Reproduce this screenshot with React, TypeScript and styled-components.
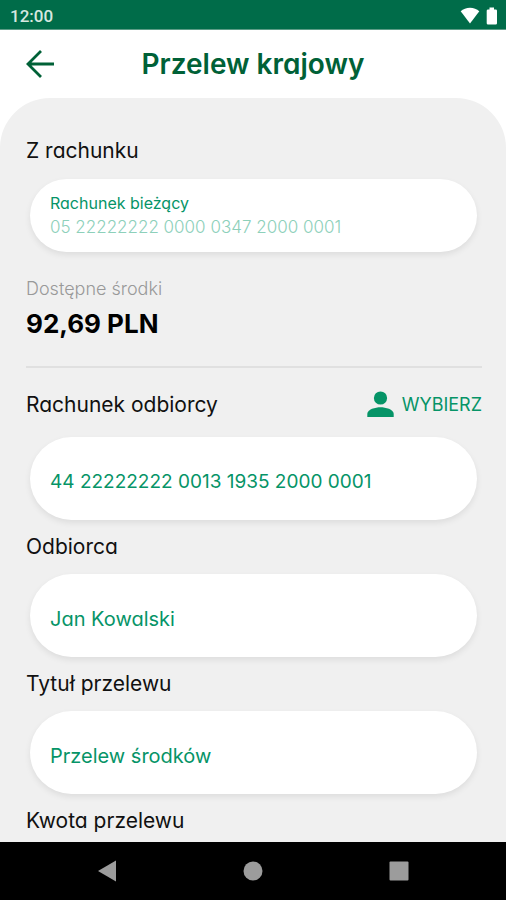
import React from "react";
import styled, { createGlobalStyle } from "styled-components";

const GlobalStyle = createGlobalStyle`
  *, *::before, *::after { box-sizing: border-box; }
  body {
    margin: 0;
    background: #fff;
    color: #111;
    font-family: "Inter", "Liberation Sans", sans-serif;
    font-feature-settings: "cv11";
  }
  button, input { font: inherit; font-feature-settings: inherit; }
`;

const Screen = styled.div`
  display: flex;
  flex-direction: column;
  height: 100vh;
  min-width: 0;
`;

const StatusBar = styled.div`
  flex: none;
  display: flex;
  align-items: center;
  justify-content: space-between;
  height: 30px;
  padding: 2px 8px 0 10px;
  background: #006c49;
  border-bottom: 1px solid #5c9c86;
`;

const Clock = styled.time`
  font-family: Roboto, sans-serif;
  font-size: 17px;
  font-weight: 500;
  line-height: 20px;
  color: #d6e8e0;
`;

const StatusIcons = styled.div`
  display: flex;
  align-items: center;
  gap: 6px;
`;

const Header = styled.header`
  flex: none;
  display: grid;
  grid-template-columns: 32px 1fr 32px;
  align-items: center;
  height: 68px;
  padding: 0 24px;
`;

const BackButton = styled.button`
  display: flex;
  padding: 0;
  border: 0;
  background: none;
  color: #006137;
`;

const Title = styled.h1`
  margin: 0;
  font-size: 28px;
  font-weight: 600;
  line-height: 36px;
  text-align: center;
  color: #006137;
`;

const Panel = styled.main`
  flex: 1;
  min-height: 0;
  overflow-y: auto;
  padding: 39px 24px 0 26px;
  border-radius: 50px 50px 0 0;
  background: #f0f0f0;
`;

const labelText = `
  font-size: 21px;
  font-weight: 400;
  line-height: 27px;
  color: #111;
`;

const SectionTitle = styled.h2`
  margin: 0;
  ${labelText}
`;

const FieldLabel = styled.label`
  display: block;
  ${labelText}
`;

const surface = `
  display: block;
  border: 0;
  background: #fff;
  box-shadow: 0 3px 6px rgba(0, 0, 0, 0.08);
  color: #069467;
  text-align: left;
`;

const AccountCard = styled.button`
  ${surface}
  width: calc(100% - 9px);
  margin: 15px 5px 0 4px;
  padding: 12px 20px 13px;
  border-radius: 37px;
`;

const AccountName = styled.span`
  display: block;
  font-size: 16px;
  line-height: 24px;
`;

const AccountNumber = styled.span`
  display: block;
  font-size: 17px;
  font-weight: 300;
  line-height: 24px;
  color: #8dd0ba;
`;

const Balance = styled.section`
  margin-top: 25px;
  padding-bottom: 24px;
  border-bottom: 2px solid #e0e0e0;
`;

const BalanceLabel = styled.p`
  margin: 0;
  font-size: 18px;
  font-weight: 300;
  line-height: 24px;
  color: #999;
`;

const Amount = styled.p`
  margin: 5px 0 0;
  font-size: 26px;
  font-weight: 700;
  line-height: 36px;
  color: #000;
`;

const LabelRow = styled.div`
  display: flex;
  align-items: center;
  justify-content: space-between;
  padding-bottom: 5px;
`;

const PickButton = styled.button`
  display: flex;
  align-items: center;
  gap: 8px;
  padding: 0;
  border: 0;
  background: none;
  font-size: 18px;
  line-height: 27px;
  color: #069467;
`;

const Form = styled.form`
  display: grid;
  gap: 13px;
  margin-top: 22px;
`;

const Field = styled.div`
  display: grid;
  gap: 14px;
  min-width: 0;
`;

const TextInput = styled.input<{ $numeric?: boolean }>`
  ${surface}
  width: calc(100% - 9px);
  height: 83px;
  margin: 0 5px 0 4px;
  padding: 6px 20px 0;
  border-radius: 42px;
  font-size: ${(p) => (p.$numeric ? "19px" : "20px")};
  line-height: 27px;
`;

const NavBar = styled.nav`
  flex: none;
  display: grid;
  grid-template-columns: repeat(3, 1fr);
  height: 58px;
  padding: 0 34px;
  background: #000;
`;

const NavButton = styled.button`
  display: flex;
  align-items: center;
  justify-content: center;
  padding: 0;
  border: 0;
  background: none;
  color: #9c9c9c;
`;

export default function App() {
  return (
    <>
      <GlobalStyle />
      <Screen>
        <StatusBar>
          <Clock>12:00</Clock>
          <StatusIcons>
            <svg width="20" height="17" viewBox="0 0 20 17" fill="#fff" aria-hidden="true">
              <path d="M10 .8C6.400 .8 3.200 2.200 .7 4.300L10 16.500 19.300 4.300C16.800 2.200 13.600 .8 10 .8Z" />
            </svg>
            <svg width="12" height="18" viewBox="0 0 12 18" fill="#fff" aria-hidden="true">
              <path d="M3.500 .5h4.500v2h1.700q1.300 0 1.300 1.300v12.400q0 1.300-1.300 1.300H2q-1.300 0-1.300-1.300V3.800Q.7 2.500 2 2.500h1.500z" />
            </svg>
          </StatusIcons>
        </StatusBar>

        <Header>
          <BackButton type="button" aria-label="Wstecz">
            <svg width="32" height="32" viewBox="0 0 32 32" fill="none" stroke="currentColor" strokeWidth="2.800" aria-hidden="true">
              <path d="M30 16H4M17 3L4 16l13 13" />
            </svg>
          </BackButton>
          <Title>Przelew krajowy</Title>
        </Header>

        <Panel>
          <SectionTitle>Z rachunku</SectionTitle>
          <AccountCard type="button">
            <AccountName>Rachunek bieżący</AccountName>
            <AccountNumber>05 22222222 0000 0347 2000 0001</AccountNumber>
          </AccountCard>

          <Balance>
            <BalanceLabel>Dostępne środki</BalanceLabel>
            <Amount>92,69 PLN</Amount>
          </Balance>

          <Form>
            <Field>
              <LabelRow>
                <FieldLabel htmlFor="account">Rachunek odbiorcy</FieldLabel>
                <PickButton type="button">
                  <svg width="27" height="28" viewBox="0 0 27 28" fill="currentColor" aria-hidden="true">
                    <circle cx="13.500" cy="8" r="6.600" />
                    <path d="M.3 27v-3.200C.3 19.400 8.500 17.300 13.500 17.300s13.200 2.100 13.200 6.500V27z" />
                  </svg>
                  WYBIERZ
                </PickButton>
              </LabelRow>
              <TextInput id="account" $numeric defaultValue="44 22222222 0013 1935 2000 0001" />
            </Field>
            <Field>
              <FieldLabel htmlFor="recipient">Odbiorca</FieldLabel>
              <TextInput id="recipient" defaultValue="Jan Kowalski" />
            </Field>
            <Field>
              <FieldLabel htmlFor="subject">Tytuł przelewu</FieldLabel>
              <TextInput id="subject" defaultValue="Przelew środków" />
            </Field>
            <SectionTitle>Kwota przelewu</SectionTitle>
          </Form>
        </Panel>

        <NavBar>
          <NavButton type="button" aria-label="Wstecz">
            <svg width="20" height="22" viewBox="0 0 20 22" fill="currentColor" aria-hidden="true">
              <path d="M1 11L19 .5v21z" />
            </svg>
          </NavButton>
          <NavButton type="button" aria-label="Ekran główny">
            <svg width="20" height="20" viewBox="0 0 20 20" fill="currentColor" aria-hidden="true">
              <circle cx="10" cy="10" r="9.500" />
            </svg>
          </NavButton>
          <NavButton type="button" aria-label="Ostatnie">
            <svg width="20" height="20" viewBox="0 0 20 20" fill="currentColor" aria-hidden="true">
              <rect x=".5" y=".5" width="19" height="19" rx="1" />
            </svg>
          </NavButton>
        </NavBar>
      </Screen>
    </>
  );
}
